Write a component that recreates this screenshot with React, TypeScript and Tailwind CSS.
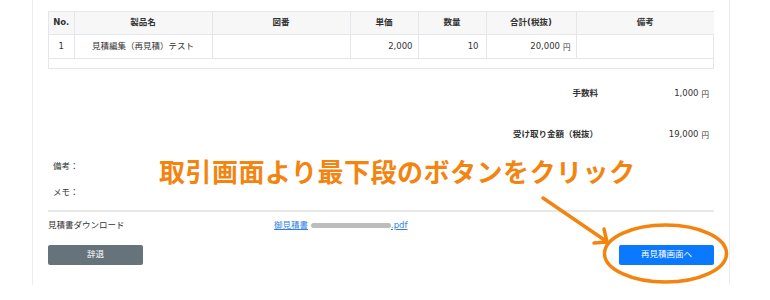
import React from "react";

const font = { fontFamily: '"DejaVu Sans", "Noto Sans CJK JP", sans-serif' };

function Yen() {
  return <span className="ml-[3px] text-[7.5px] relative top-[1px]">円</span>;
}

export default function App() {
  const cols = [25, 138, 138, 68, 68, 90, 138];
  return (
    <div className="w-[770px] h-[300px] bg-white overflow-hidden relative text-[#333]" style={font}>
      <div className="ml-[32px] w-[698px] h-[285px] border-x border-[#ececec] px-[15px] pt-[11px] text-[8.5px]">
        {/* table */}
        <div className="border border-[#e3e6ea]">
          <table className="table-fixed border-collapse w-full">
            <colgroup>
              {cols.map((w, i) => (
                <col key={i} style={{ width: w }} />
              ))}
            </colgroup>
            <thead>
              <tr className="bg-[#f7f7f7] h-[22px] font-bold">
                <th className="border-r border-b border-[#e3e6ea]">No.</th>
                <th className="border-r border-b border-[#e3e6ea]">製品名</th>
                <th className="border-r border-b border-[#e3e6ea]">図番</th>
                <th className="border-r border-b border-[#e3e6ea]">単価</th>
                <th className="border-r border-b border-[#e3e6ea]">数量</th>
                <th className="border-r border-b border-[#e3e6ea]">合計(税抜)</th>
                <th className="border-b border-[#e3e6ea]">備考</th>
              </tr>
            </thead>
            <tbody>
              <tr className="h-[24px] font-normal">
                <td className="border-r border-b border-[#e3e6ea] text-center">1</td>
                <td className="border-r border-b border-[#e3e6ea] text-center">見積編集（再見積）テスト</td>
                <td className="border-r border-b border-[#e3e6ea]"></td>
                <td className="border-r border-b border-[#e3e6ea] text-right pr-[5px]">2,000</td>
                <td className="border-r border-b border-[#e3e6ea] text-right pr-[7px]">10</td>
                <td className="border-r border-b border-[#e3e6ea] text-right pr-[5px]">
                  20,000<Yen />
                </td>
                <td className="border-b border-[#e3e6ea]"></td>
              </tr>
            </tbody>
          </table>
          <div className="h-[9px]"></div>
        </div>

        {/* summary */}
        <div className="mt-[17px] flex flex-col gap-[25px]">
          <div className="flex items-center h-[16px]">
            <div className="w-[550px] text-right font-bold">手数料</div>
            <div className="flex-1 text-right pr-[5px]">
              1,000<Yen />
            </div>
          </div>
          <div className="flex items-center h-[16px]">
            <div className="w-[550px] text-right font-bold">受け取り金額（税抜）</div>
            <div className="flex-1 text-right pr-[5px]">
              19,000<Yen />
            </div>
          </div>
        </div>

        {/* notes */}
        <div className="mt-[15px] pl-[5px] flex flex-col gap-[10px]">
          <div className="h-[16px] leading-[16px]">備考：</div>
          <div className="h-[16px] leading-[16px]">メモ：</div>
        </div>

        <div className="mt-[10px] h-[2px] bg-[#e8e8e8]"></div>

        <div className="mt-[7px] flex items-center h-[14px]">
          <div className="w-[226px]">見積書ダウンロード</div>
          <a className="text-[#2f7fe6] underline flex items-center">
            御見積書
            <span className="inline-block ml-[3px] w-[80px] h-[5px] rounded-full bg-[#bdbdbd]"></span>
            <span>.pdf</span>
          </a>
        </div>

        <div className="mt-[12px] flex justify-between">
          <button className="w-[95px] h-[20px] rounded-[2px] bg-[#67737b] text-white text-[8.5px]">辞退</button>
          <button className="w-[95px] h-[20px] rounded-[2px] bg-[#0a78ff] text-white text-[8.5px]">再見積画面へ</button>
        </div>
      </div>

      {/* annotation */}
      <div
        className="absolute left-[159px] top-[158px] text-[26px] font-bold text-[#f3840f] leading-none tracking-[0.5px]"
        style={{ fontFamily: '"Noto Sans CJK JP", sans-serif' }}
      >
        取引画面より最下段のボタンをクリック
      </div>
      <svg className="absolute left-0 top-0" width="770" height="300" viewBox="0 0 770 300">
        <g fill="none" stroke="#f3840f" strokeWidth="3.5" strokeLinecap="round" strokeLinejoin="round">
          <line x1="543" y1="198" x2="606" y2="241" />
          <polyline points="594,243 607,242 604,229" />
          <ellipse cx="665.5" cy="253.5" rx="61" ry="28.5" />
        </g>
      </svg>
    </div>
  );
}
